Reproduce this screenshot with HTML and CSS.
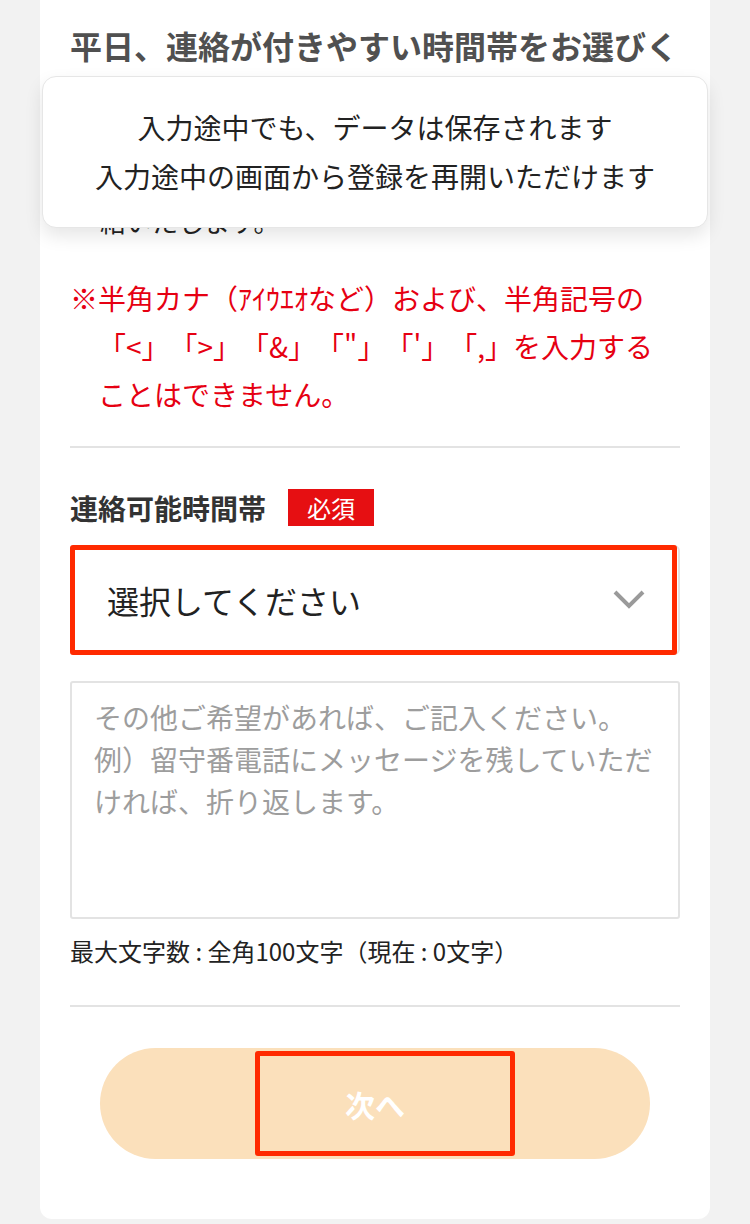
FILE: index.html
```html
<!DOCTYPE html>
<html lang="ja">
<head>
<meta charset="utf-8">
<link rel="stylesheet" href="styles.css">
</head>
<body>
<div class="page">
  <main class="card">
    <h2 class="title">平日、連絡が付きやすい時間帯をお選びください。</h2>
    <p class="hidden-note">※ご希望の時間帯に、担当者よりご連<br>絡いたします。</p>
    <p class="warn">※半角カナ（ｱｲｳｴｵなど）および、半角記号の「&lt;」「&gt;」「&amp;」「"」「'」「,」を入力することはできません。</p>
    <hr class="sep">
    <div class="field-label">
      <span class="label-text">連絡可能時間帯</span>
      <span class="badge">必須</span>
    </div>
    <div class="select-wrap">
      <div class="select">
        <span class="select-text">選択してください</span>
        <svg class="chevron" width="34" height="22" viewBox="0 0 34 22"><polyline points="3,3 17,17 31,3" fill="none" stroke="#9a9a9a" stroke-width="4"/></svg>
      </div>
      <div class="highlight"></div>
    </div>
    <div class="textarea">
      <span class="placeholder">その他ご希望があれば、ご記入ください。<br>例）留守番電話にメッセージを残していただければ、折り返します。</span>
    </div>
    <p class="counter">最大文字数 : 全角100文字（現在 : 0文字）</p>
    <hr class="sep sep2">
    <div class="btn-row">
      <div class="btn">次へ<div class="highlight btn-hl"></div></div>
    </div>
  </main>
  <div class="toast">
    <p>入力途中でも、データは保存されます</p>
    <p>入力途中の画面から登録を再開いただけます</p>
  </div>
</div>
</body>
</html>
```

FILE: styles.css
```css
html, body {
  margin: 0;
  padding: 0;
  background: #f2f2f2;
  font-family: "Noto Sans CJK JP", "Noto Sans", sans-serif;
}
.page {
  position: relative;
  width: 750px;
  height: 1224px;
  overflow: hidden;
}
.card {
  margin: 0 40px;
  background: #fff;
  border-radius: 0 0 12px 12px;
  padding: 20px 30px 60px;
}
.title {
  margin: 0;
  font-size: 32px;
  line-height: 50px;
  font-weight: 700;
  color: #505050;
}
.hidden-note {
  margin: 41px 0 0;
  font-size: 26px;
  line-height: 40px;
  color: #222;
  padding-left: 30px;
}
.warn {
  margin: 33px 0 0;
  font-size: 28px;
  line-height: 48px;
  color: #e60012;
  padding-left: 1em;
  text-indent: -1em;
  text-spacing-trim: space-all;
  font-feature-settings: normal;
}
.sep {
  border: 0;
  height: 2px;
  background: #e3e3e3;
  margin: 28px 0 0;
}
.field-label {
  display: flex;
  align-items: center;
  gap: 22px;
  margin-top: 41px;
  height: 37px;
}
.label-text {
  font-size: 28px;
  font-weight: 700;
  color: #333;
}
.badge {
  background: #e60f12;
  color: #fff;
  font-size: 24px;
  line-height: 37px;
  padding: 0 19px;
}
.select-wrap {
  position: relative;
  margin-top: 19px;
}
.select {
  height: 110px;
  box-sizing: border-box;
  border: 2px solid #e3e3e3;
  border-radius: 6px;
  display: flex;
  align-items: center;
  justify-content: space-between;
  padding: 0 32px 0 35px;
}
.select-text {
  font-size: 32px;
  color: #222;
}
.chevron {
  display: block;
}
.highlight {
  position: absolute;
  top: 0;
  left: 0;
  right: 3px;
  bottom: 0;
  border: 5px solid #ff2a00;
  border-radius: 3px;
}
.textarea {
  margin-top: 26px;
  height: 238px;
  box-sizing: border-box;
  border: 2px solid #e3e3e3;
  border-radius: 3px;
  padding: 13px 22px;
}
.placeholder {
  font-size: 28px;
  line-height: 42px;
  color: #9d9d9d;
}
.counter {
  margin: 15px 0 0;
  font-size: 24px;
  line-height: 34px;
  color: #222;
}
.sep2 {
  margin-top: 37px;
}
.btn-row {
  display: flex;
  justify-content: center;
  margin-top: 41px;
}
.btn {
  position: relative;
  width: 550px;
  height: 111px;
  border-radius: 56px;
  background: #fbe0bb;
  color: #fff;
  font-size: 30px;
  font-weight: 700;
  display: flex;
  align-items: center;
  justify-content: center;
}
.btn-hl {
  top: 3px;
  left: 155px;
  right: auto;
  bottom: auto;
  width: 260px;
  height: 105px;
  box-sizing: border-box;
}
.toast {
  position: absolute;
  left: 42px;
  top: 76px;
  width: 666px;
  height: 152px;
  box-sizing: border-box;
  background: #fff;
  border: 1px solid #e6e6e6;
  border-radius: 14px;
  box-shadow: 0 8px 18px rgba(0, 0, 0, 0.10);
  display: flex;
  flex-direction: column;
  justify-content: center;
  align-items: center;
}
.toast p {
  margin: 0;
  font-size: 28px;
  line-height: 49px;
  color: #222;
}
```
